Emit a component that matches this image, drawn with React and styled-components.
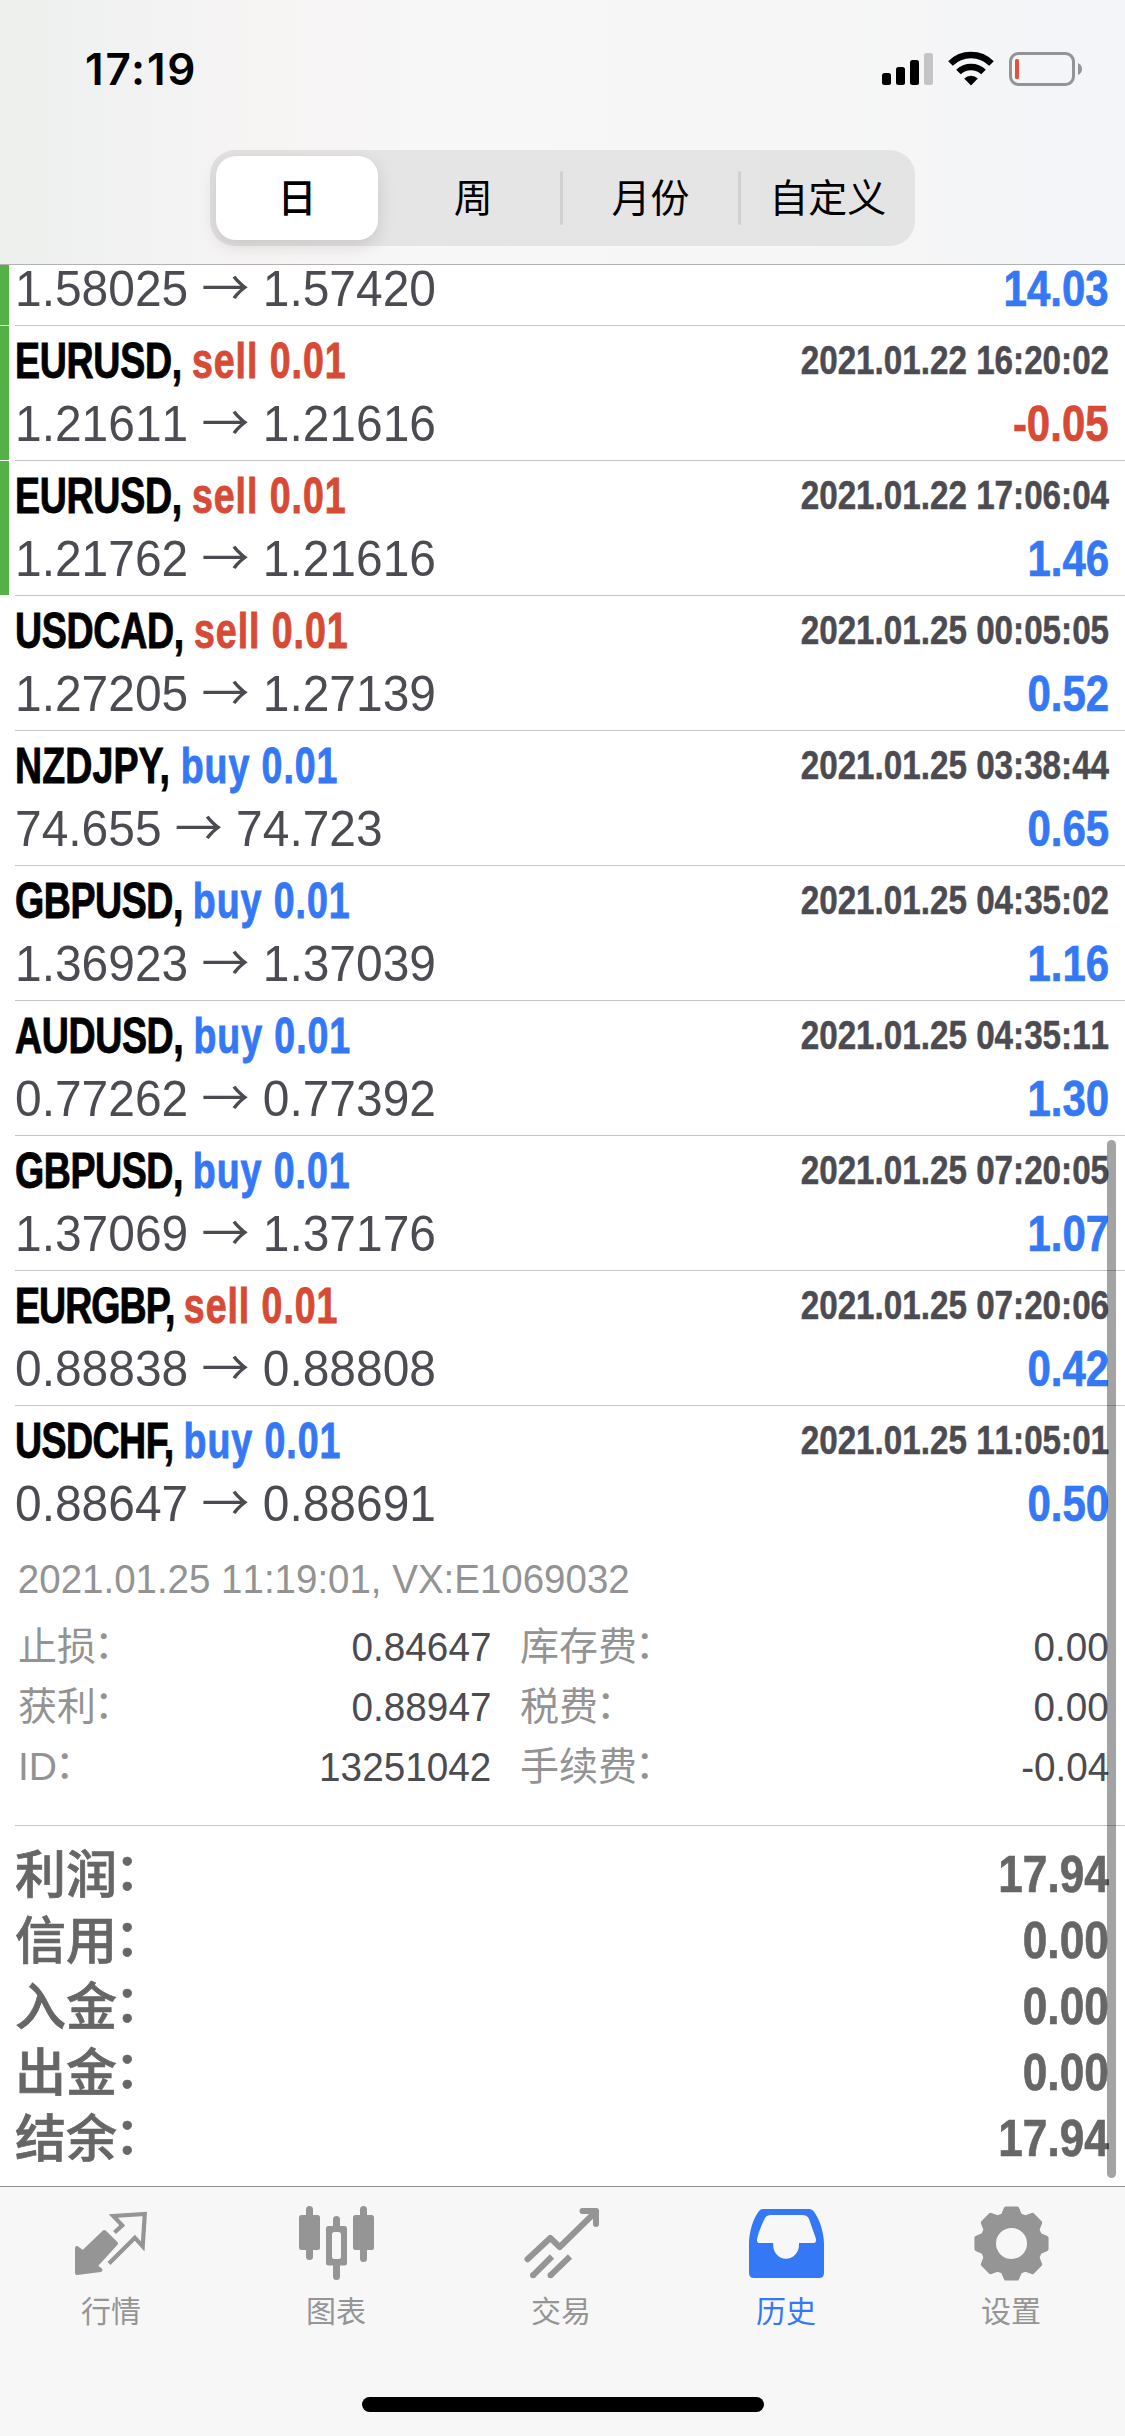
import React from 'react'
import styled, { createGlobalStyle } from 'styled-components'

const GlobalStyle = createGlobalStyle`
  * {
    box-sizing: border-box;
  }
  body {
    margin: 0;
    background-color: #fff;
    font-family: 'Liberation Sans', 'Noto Sans CJK SC', sans-serif;
  }
`

const BLUE = '#3478f6'
const RED = '#d64a36'
const DARK = '#4c4b51'
const GREY = '#939393'

const Screen = styled.div`
  position: relative;
  width: 1125px;
  height: 2436px;
  display: flex;
  flex-direction: column;
  overflow: hidden;
  background-color: #fff;
`

const Header = styled.header`
  flex: none;
  height: 265px;
  border-bottom: 1px solid #b2b2b3;
  background: linear-gradient(90deg, #edf0ed 0, #f0f1f1 90px, #f4f3f3 190px, #f7f4f4 260px, #f7f7f7 420px, #f6f6f6 850px, #f3f5f9 1125px);
`

const StatusBar = styled.div`
  height: 150px;
  padding: 0 43px 0 85px;
  display: flex;
  justify-content: space-between;
`

const Clock = styled.div`
  margin-top: 39px;
  font-family: Inter, sans-serif;
  font-size: 44px;
  line-height: 60px;
  font-weight: 600;
  letter-spacing: 1.8px;
  color: #000;
`

const Indicators = styled.svg`
  margin-top: 50px;
  width: 201px;
  height: 38px;
`

const Segments = styled.div`
  width: 705px;
  height: 96px;
  margin: 0 auto;
  padding: 6px 0 6px 6px;
  display: flex;
  border-radius: 25px;
  background-color: rgba(0, 0, 0, 0.07);
`

const Segment = styled.div`
  flex: ${({ $active }) => ($active ? '0 0 162px' : '1')};
  margin-right: ${({ $active }) => ($active ? '8px' : '0')};
  padding-top: 2px;
  display: flex;
  align-items: center;
  justify-content: center;
  border-radius: 20px;
  font-size: 39px;
  line-height: 56px;
  font-weight: ${({ $active }) => ($active ? 500 : 400)};
  color: #000;
  background-color: ${({ $active }) => ($active ? '#fff' : 'transparent')};
  box-shadow: ${({ $active }) => ($active ? '0 6px 18px rgba(0, 0, 0, 0.12)' : 'none')};
`

const SegmentLine = styled.div`
  width: 3px;
  height: 54px;
  margin-top: 15px;
  border-radius: 2px;
  background-color: #d0d0d1;
`

const List = styled.main`
  flex: 1;
  min-height: 0;
  overflow: hidden;
`

const Deal = styled.div`
  height: ${({ $cut }) => ($cut ? '61px' : '135px')};
  display: flex;
`

const Marker = styled.div`
  width: 9px;
  margin-bottom: 1px;
  margin-right: 6px;
  background-color: ${({ $on }) => ($on ? '#53b145' : 'transparent')};
`

const DealBody = styled.div`
  flex: 1;
  padding-right: 16px;
  display: flex;
  flex-direction: column;
  justify-content: flex-end;
  padding-bottom: 7px;
  border-bottom: 1px solid ${({ $open }) => ($open ? 'transparent' : '#c5c5c7')};
`

const Line = styled.div`
  display: flex;
  justify-content: space-between;
  white-space: nowrap;
`

/* narrow faces are made from the regular one, squeezed to its edge */
const Title = styled.div`
  font-size: 49.4px;
  line-height: 68px;
  font-weight: 700;
  transform: scaleX(0.76);
  transform-origin: left;
  -webkit-text-stroke: 0.9px currentColor;
`

const Pair = styled.span`
  letter-spacing: ${({ $tracking }) => $tracking}em;
  color: #000;
`

const Side = styled.span`
  letter-spacing: 0.025em;
  color: ${({ $side }) => ($side === 'buy' ? BLUE : RED)};
`

const Time = styled.div`
  font-size: 40.5px;
  line-height: 66px;
  font-weight: 700;
  font-kerning: none;
  color: ${DARK};
  transform: scaleX(0.82);
  transform-origin: right;
  -webkit-text-stroke: 0.5px currentColor;
`

const Price = styled.div`
  font-size: 49.4px;
  line-height: 58px;
  font-kerning: none;
  color: ${DARK};
  transform: scaleX(0.97);
  transform-origin: left;
`

const Arrow = styled.span`
  font-family: 'Noto Sans CJK SC', sans-serif;
  font-weight: 400;
  line-height: 1;
`

const Profit = styled.div`
  font-size: 49.4px;
  line-height: 58px;
  font-weight: 700;
  font-kerning: none;
  color: ${({ $loss }) => ($loss ? RED : BLUE)};
  transform: scaleX(0.85);
  transform-origin: right;
  -webkit-text-stroke: 0.7px currentColor;
`

const Details = styled.div`
  margin-left: 15px;
  height: 285px;
  border-bottom: 1px solid #c5c5c7;
`

const Comment = styled.div`
  padding-left: 3px;
  font-size: 40.5px;
  line-height: 76px;
  font-kerning: none;
  color: ${GREY};
  white-space: nowrap;
  transform: scaleX(0.95);
  transform-origin: left;
`

const DetailGrid = styled.div`
  display: grid;
  grid-template-columns: 473px 589px;
  grid-auto-rows: 60px;
  column-gap: 29px;
  padding-left: 3px;
`

const Detail = styled.div`
  display: flex;
  justify-content: space-between;
  line-height: 60px;
`

const DetailLabel = styled.span`
  font-size: 39px;
  font-weight: 400;
  color: ${GREY};
`

const DetailValue = styled.span`
  font-size: 40.5px;
  font-kerning: none;
  color: ${DARK};
  transform: scaleX(0.955);
  transform-origin: right;
`

const Colon = styled.span`
  position: relative;
  top: -0.05em;
  left: -0.05em;
`

const Totals = styled.div`
  padding: 15px 16px 0 15px;
`

const Total = styled.div`
  height: 66px;
  display: flex;
  justify-content: space-between;
  line-height: 66px;
  font-weight: 700;
  color: #666;
`

const TotalLabel = styled.span`
  padding-top: 2px;
  font-size: 51px;
  font-weight: 500;
  -webkit-text-stroke: 0.7px currentColor;
`

const TotalValue = styled.span`
  font-size: 52.3px;
  font-kerning: none;
  transform: scaleX(0.845);
  transform-origin: right;
  -webkit-text-stroke: 0.7px currentColor;
`

const ScrollThumb = styled.div`
  position: absolute;
  top: 1140px;
  left: 1107px;
  width: 9px;
  height: 1038px;
  border-radius: 5px;
  background-color: rgba(0, 0, 0, 0.36);
`

const TabBar = styled.nav`
  flex: none;
  height: 250px;
  display: flex;
  flex-direction: column;
  align-items: center;
  border-top: 1px solid #909092;
  background-color: #f7f7f7;
`

const Tabs = styled.div`
  width: 100%;
  height: 210px;
  display: flex;
`

const Tab = styled.div`
  flex: 1;
  padding-top: 13px;
  padding-right: 3px;
  display: flex;
  flex-direction: column;
  align-items: center;
  color: ${({ $active }) => ($active ? BLUE : '#959595')};
`

const TabIcon = styled.svg`
  width: 79px;
  height: 84px;
`

const TabLabel = styled.div`
  margin-top: 6px;
  font-size: 30px;
  line-height: 44px;
`

const HomeBar = styled.div`
  width: 402px;
  height: 15px;
  border-radius: 8px;
  background-color: #000;
`

const deals = [
  { id: 1, open: '1.58025', close: '1.57420', profit: '14.03', marked: true },
  { id: 2, pair: 'EURUSD', side: 'sell', time: '2021.01.22 16:20:02', open: '1.21611', close: '1.21616', profit: '-0.05', marked: true },
  { id: 3, pair: 'EURUSD', side: 'sell', time: '2021.01.22 17:06:04', open: '1.21762', close: '1.21616', profit: '1.46', marked: true },
  { id: 4, pair: 'USDCAD', side: 'sell', time: '2021.01.25 00:05:05', open: '1.27205', close: '1.27139', profit: '0.52' },
  { id: 5, pair: 'NZDJPY', side: 'buy', time: '2021.01.25 03:38:44', open: '74.655', close: '74.723', profit: '0.65' },
  { id: 6, pair: 'GBPUSD', side: 'buy', time: '2021.01.25 04:35:02', open: '1.36923', close: '1.37039', profit: '1.16' },
  { id: 7, pair: 'AUDUSD', side: 'buy', time: '2021.01.25 04:35:11', open: '0.77262', close: '0.77392', profit: '1.30' },
  { id: 8, pair: 'GBPUSD', side: 'buy', time: '2021.01.25 07:20:05', open: '1.37069', close: '1.37176', profit: '1.07' },
  { id: 9, pair: 'EURGBP', side: 'sell', time: '2021.01.25 07:20:06', open: '0.88838', close: '0.88808', profit: '0.42' },
  { id: 10, pair: 'USDCHF', side: 'buy', time: '2021.01.25 11:05:01', open: '0.88647', close: '0.88691', profit: '0.50', expanded: true },
]

// letter spacing of each symbol, in em
const tracking = {
  EURUSD: -0.008,
  USDCAD: -0.008,
  NZDJPY: 0.003,
  GBPUSD: -0.012,
  AUDUSD: -0.01,
  EURGBP: -0.026,
  USDCHF: -0.015,
}

const details = [
  ['止损', '0.84647'],
  ['库存费', '0.00'],
  ['获利', '0.88947'],
  ['税费', '0.00'],
  ['ID', '13251042'],
  ['手续费', '-0.04'],
]

const totals = [
  ['利润', '17.94'],
  ['信用', '0.00'],
  ['入金', '0.00'],
  ['出金', '0.00'],
  ['结余', '17.94'],
]

const gearPoints = Array.from({ length: 8 }, (_, i) =>
  [[-17, 29.5], [-9, 35.5], [9, 35.5], [17, 29.5]].map(([deg, r]) => {
    const a = ((i * 45 + deg) * Math.PI) / 180
    return `${(39.5 + r * Math.sin(a)).toFixed(2)} ${(43.5 - r * Math.cos(a)).toFixed(2)}`
  })
).flat()

const QuotesIcon = () => (
  <TabIcon viewBox="0 0 79 84">
    <path d="M5 48L11 52.5L32.3 32L44 43.4L23.5 66L28.5 70L5 73Z" fill="currentColor" stroke="currentColor" strokeWidth="4" strokeLinejoin="round" />
    <path d="M42.5 32.5L50.2 25.3L41.3 16L72.8 14L70.7 46.5L62.8 37.7L37 63.5" fill="none" stroke="currentColor" strokeWidth="4.2" />
  </TabIcon>
)

const ChartIcon = () => (
  <TabIcon viewBox="0 0 79 84" fill="currentColor">
    <rect x="2" y="15" width="21" height="35" rx="2.5" />
    <rect x="9" y="6" width="7" height="54" rx="3.5" />
    <path fillRule="evenodd" d="M31.5 26H47.5Q50 26 50 28.5V63Q50 65.5 47.5 65.5H31.5Q29 65.5 29 63V28.5Q29 26 31.5 26ZM37.5 32Q35 32 35 34.5V56.5Q35 59 37.5 59H41.5Q44 59 44 56.5V34.5Q44 32 41.5 32Z" />
    <path d="M36 28V19.5Q36 16 39.5 16T43 19.5V28Z" />
    <path d="M36 64V76.5Q36 80 39.5 80T43 76.5V64Z" />
    <rect x="56" y="15" width="21" height="35" rx="2.5" />
    <rect x="63" y="6" width="7" height="56" rx="3.5" />
  </TabIcon>
)

const TradeIcon = () => (
  <TabIcon viewBox="0 0 79 84" fill="none" stroke="currentColor" strokeWidth="6" strokeLinejoin="round">
    <path d="M5.5 59.3L28.3 38L37.7 47L74 11.5" strokeLinecap="round" />
    <path d="M60.5 11H74V24" strokeLinecap="round" />
    <path d="M11 75.3L30 56.5M28.5 75.3L48 56.5" />
    <path d="M11 75.3h.01M28.5 75.3h.01" strokeLinecap="round" />
  </TabIcon>
)

const HistoryIcon = () => (
  <TabIcon viewBox="0 0 79 84">
    <path
      fill="currentColor"
      fillRule="evenodd"
      d="M2 44C2 31 6.5 18 12 11Q13.5 9 16 9H62Q64.5 9 66.5 11C72.5 19 77 32 77 44V73Q77 78 72 78H7Q2 78 2 73ZM24 15H55Q60.5 15 62 19L68.7 38Q70 43 66 43H52V45C52 53 46 58.7 39 58.7C32 58.7 26.2 53 26.2 45V43H13Q9 43 10.3 38C12 31 15 24 17.5 19Q19 15 24 15Z"
    />
  </TabIcon>
)

const SettingsIcon = () => (
  <TabIcon viewBox="0 0 79 84">
    <path
      fill="currentColor"
      stroke="currentColor"
      strokeWidth="4"
      strokeLinejoin="round"
      d={`M${gearPoints.join('L')}Z`}
    />
    <circle cx="39.5" cy="43.5" r="15.5" fill="#f7f7f7" />
  </TabIcon>
)

const tabs = [
  { label: '行情', Icon: QuotesIcon },
  { label: '图表', Icon: ChartIcon },
  { label: '交易', Icon: TradeIcon },
  { label: '历史', Icon: HistoryIcon, active: true },
  { label: '设置', Icon: SettingsIcon },
]

const StatusIcons = () => (
  <Indicators viewBox="0 0 201 38">
    <rect x="1" y="23" width="9" height="12" rx="2.5" />
    <rect x="15" y="17" width="9" height="18" rx="2.5" />
    <rect x="29" y="10" width="9" height="25" rx="2.5" />
    <rect x="43" y="3" width="9" height="32" rx="2.5" fill="#c4c4c5" />
    <g fill="none" stroke="#000" strokeWidth="6.5">
      <path d="M69.5 13.5A29 29 0 0 1 110.5 13.5" />
      <path d="M77.5 22A18 18 0 0 1 102.5 22" />
    </g>
    <path d="M90 35.5L83.2 28.5A9.8 9.8 0 0 1 96.8 28.5Z" />
    <rect x="129.5" y="3.5" width="63" height="31" rx="8" fill="none" stroke="#949497" strokeWidth="3" />
    <path d="M197 13Q201 15 201 19T197 25Z" fill="#949497" />
    <rect x="134" y="9" width="4" height="20" rx="1.5" fill="#eb4d3d" />
  </Indicators>
)

const DealRow = ({ deal }) => (
  <Deal $cut={!deal.pair}>
    <Marker $on={deal.marked} />
    <DealBody $open={deal.expanded}>
      {deal.pair && (
        <Line>
          <Title>
            <Pair $tracking={tracking[deal.pair]}>{deal.pair}, </Pair>
            <Side $side={deal.side}>{deal.side} 0.01</Side>
          </Title>
          <Time>{deal.time}</Time>
        </Line>
      )}
      <Line>
        <Price>
          {deal.open} <Arrow>→</Arrow> {deal.close}
        </Price>
        <Profit $loss={deal.profit.startsWith('-')}>{deal.profit}</Profit>
      </Line>
    </DealBody>
  </Deal>
)

const App = () => {
  return (
    <Screen>
      <GlobalStyle />
      <Header>
        <StatusBar>
          <Clock>17:19</Clock>
          <StatusIcons />
        </StatusBar>
        <Segments>
          <Segment $active>日</Segment>
          <Segment>周</Segment>
          <SegmentLine />
          <Segment>月份</Segment>
          <SegmentLine />
          <Segment>自定义</Segment>
        </Segments>
      </Header>
      <List>
        {deals.map((deal) => (
          <DealRow key={deal.id} deal={deal} />
        ))}
        <Details>
          <Comment>2021.01.25 11:19:01, VX:E1069032</Comment>
          <DetailGrid>
            {details.map(([label, value]) => (
              <Detail key={label}>
                <DetailLabel>
                  {label}
                  <Colon>：</Colon>
                </DetailLabel>
                <DetailValue>{value}</DetailValue>
              </Detail>
            ))}
          </DetailGrid>
        </Details>
        <Totals>
          {totals.map(([label, value]) => (
            <Total key={label}>
              <TotalLabel>
                {label}
                <Colon>：</Colon>
              </TotalLabel>
              <TotalValue>{value}</TotalValue>
            </Total>
          ))}
        </Totals>
      </List>
      <ScrollThumb />
      <TabBar>
        <Tabs>
          {tabs.map(({ label, Icon, active }) => (
            <Tab key={label} $active={active}>
              <Icon />
              <TabLabel>{label}</TabLabel>
            </Tab>
          ))}
        </Tabs>
        <HomeBar />
      </TabBar>
    </Screen>
  )
}

export default App
